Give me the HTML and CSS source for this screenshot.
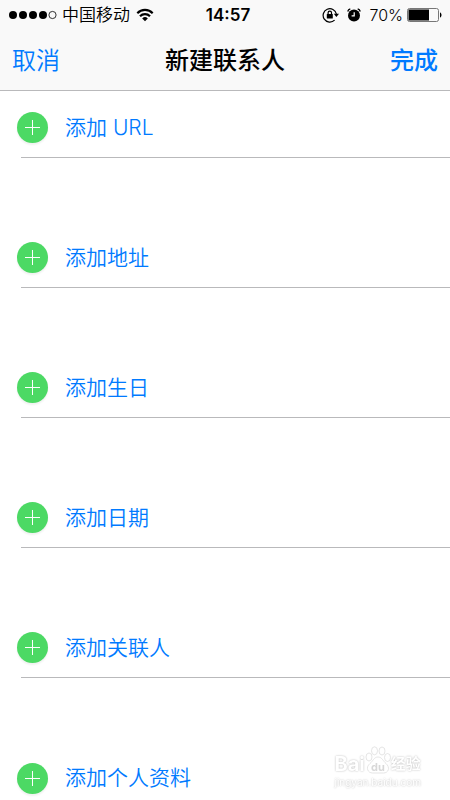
FILE: index.html
```
<!DOCTYPE html>
<html lang="zh-CN">

<head>
    <meta charset="utf-8">
    <title>新建联系人</title>
    <meta name="viewport" content="width=device-width, initial-scale=1">
    <link rel="stylesheet" href="styles.css">
</head>

<body>
    <header class="top">
        <div class="status">
            <div class="status-left">
                <svg class="signal" viewBox="0 0 48 10" width="48" height="10">
                    <circle cx="4" cy="5" r="4" />
                    <circle cx="14" cy="5" r="4" />
                    <circle cx="24" cy="5" r="4" />
                    <circle cx="34" cy="5" r="4" />
                    <circle class="empty" cx="43.5" cy="5" r="3.6" />
                </svg>
                <span class="carrier">中国移动</span>
                <svg class="wifi" viewBox="0 0 18 14" width="18" height="14">
                    <path d="M1.3 5.2a10.8 10.8 0 0 1 15.4 0" />
                    <path d="M4 8.2a7 7 0 0 1 10 0" />
                    <path class="dot" d="M9 13.2L6.2 10.4a4 4 0 0 1 5.6 0z" />
                </svg>
            </div>
            <span class="clock">14:57</span>
            <div class="status-right">
                <svg class="lock" viewBox="0 0 18 16" width="18" height="16">
                    <path d="M12.6 13.1a6.7 6.7 0 1 1 1.8-6.1" />
                    <path class="fill" d="M11.8 6.8h5.2l-2.6 3.2z" />
                    <rect class="fill" x="4.8" y="7" width="6" height="4.5" rx="0.5" />
                    <path d="M6.1 7.2V5.8a1.7 1.7 0 0 1 3.4 0v1.4" />
                </svg>
                <svg class="alarm" viewBox="0 0 14 14" width="14" height="14">
                    <circle cx="7" cy="7.5" r="6" />
                    <path class="line" d="M0.7 3.5a4 4 0 0 1 2.6-2.6M13.3 3.5a4 4 0 0 0-2.6-2.6" />
                    <path class="hand" d="M7.2 4.2v3.6H4.6" />
                </svg>
                <span class="percent">70%</span>
                <svg class="battery" viewBox="0 0 35 14" width="35" height="14">
                    <rect class="case" x="0.5" y="0.5" width="31" height="13" rx="2" />
                    <rect x="1.5" y="1.5" width="20.5" height="11" />
                    <path d="M33 4.5c2 0.6 2 4.4 0 5z" />
                </svg>
            </div>
        </div>
        <nav class="navbar">
            <button class="cancel" type="button">取消</button>
            <h1>新建联系人</h1>
            <button class="done" type="button">完成</button>
        </nav>
    </header>

    <main class="fields">
        <button class="field" type="button"><span class="plus"></span><span class="label">添加 URL</span></button>
        <button class="field" type="button"><span class="plus"></span><span class="label">添加地址</span></button>
        <button class="field" type="button"><span class="plus"></span><span class="label">添加生日</span></button>
        <button class="field" type="button"><span class="plus"></span><span class="label">添加日期</span></button>
        <button class="field" type="button"><span class="plus"></span><span class="label">添加关联人</span></button>
        <button class="field" type="button"><span class="plus"></span><span class="label">添加个人资料</span></button>
    </main>

    <div class="watermark">
        <div class="brand">
            <span>Bai</span>
            <svg class="paw" viewBox="0 0 26 28" width="26" height="28">
                <ellipse cx="4" cy="11" rx="3" ry="4" />
                <ellipse cx="9.5" cy="4.8" rx="3" ry="4" />
                <ellipse cx="17" cy="5" rx="3" ry="4" />
                <ellipse cx="22.5" cy="11.5" rx="3" ry="4" />
                <path d="M13 11c-4 0-5 4-8 6.5c-5 4-2 9.5 2.500 9.500h11c5 0 7-5.500 2.500-9.500c-3-2.500-4-6.500-8-6.500z" />
                <text x="13" y="25" text-anchor="middle">du</text>
            </svg>
            <span class="cn">经验</span>
        </div>
        <div class="site">jingyan.baidu.com</div>
    </div>
</body>

</html>
```
FILE: styles.css
```
* {
    box-sizing: border-box;
}

body {
    margin: 0;
    min-height: 100vh;
    background: #fff;
    color: #000;
    font-family: Inter, "Noto Sans CJK SC", sans-serif;
}

button {
    padding: 0;
    border: none;
    background: none;
    color: #007aff;
    font-family: inherit;
    cursor: pointer;
}

.top {
    background: #f9f9f9;
    border-bottom: 1px solid #b9b9bb;
}

.status {
    display: grid;
    grid-template-columns: 1fr auto 1fr;
    align-items: center;
    height: 29px;
    padding: 0 8px 0 9px;
    font-size: 17px;
    line-height: 20px;
}

.status-left,
.status-right {
    display: flex;
    align-items: center;
}

.status-right {
    justify-content: flex-end;
}

.signal .empty {
    fill: none;
    stroke: #000;
    stroke-width: 0.8;
}

.carrier {
    margin: 0 6px 0 5px;
    font-weight: 350;
}

.wifi {
    fill: none;
    stroke: #000;
    stroke-width: 2.2;
}

.wifi .dot {
    fill: #000;
    stroke: none;
}

.clock {
    padding-left: 5px;
    font-weight: 600;
}

.lock {
    margin-right: 7px;
    fill: none;
    stroke: #000;
    stroke-width: 1.2;
}

.lock .fill {
    fill: #000;
    stroke: none;
}

.alarm {
    margin-right: 8px;
}

.alarm .line {
    fill: none;
    stroke: #000;
    stroke-width: 1.3;
}

.alarm .hand {
    fill: none;
    stroke: #fff;
    stroke-width: 1.2;
}

.percent {
    margin-right: 4px;
    font-size: 16px;
    font-weight: 350;
}

.battery .case {
    fill: none;
    stroke: #777;
}

.navbar {
    display: grid;
    grid-template-columns: 1fr auto 1fr;
    align-items: center;
    height: 61px;
    padding: 3px 12px 0;
}

.navbar h1 {
    margin: 0;
    font-size: 24px;
    font-weight: 500;
    line-height: 36px;
}

.cancel,
.done {
    font-size: 24px;
    line-height: 36px;
}

.cancel {
    justify-self: start;
    font-weight: 350;
}

.done {
    justify-self: end;
    font-weight: 500;
}

.fields {
    display: flex;
    flex-direction: column;
    gap: 63px;
    padding-left: 21px;
}

.field {
    display: flex;
    align-items: center;
    height: 67px;
    padding-top: 7px;
    border-bottom: 1px solid #b9b9bb;
    font-size: 21px;
    font-weight: 350;
}

.field:last-child {
    height: 59px;
    padding-top: 15px;
    border-bottom: none;
}

.label {
    padding-bottom: 4px;
}

.plus {
    width: 31px;
    height: 31px;
    margin: 0 17px 0 -4px;
    border-radius: 50%;
    background:
        linear-gradient(#fff, #fff) center / 15px 1px no-repeat,
        linear-gradient(#fff, #fff) center / 1px 15px no-repeat,
        #4cd964;
    box-shadow: 0 2px 2px rgba(0, 0, 0, .06);
}

.watermark {
    position: fixed;
    right: 29px;
    bottom: 10px;
    color: #fff;
    text-shadow: 0 0 2px #b4b4b4;
}

.brand {
    display: flex;
    align-items: flex-end;
    font-size: 20px;
    font-weight: 700;
    line-height: 20px;
}

.brand .cn {
    font-size: 15px;
}

.paw {
    fill: #fff;
    stroke: #dedede;
    stroke-width: 0.8;
}

.paw text {
    fill: #d8d8d8;
    font-size: 11px;
    stroke: none;
    text-shadow: none;
}

.site {
    font-size: 10px;
    line-height: 16px;
}
```
